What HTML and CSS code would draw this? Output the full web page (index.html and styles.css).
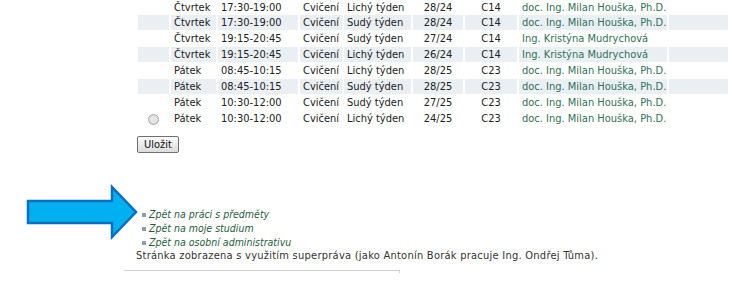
FILE: index.html
```html
<!DOCTYPE html>
<html lang="cs">
<head>
  <meta charset="UTF-8">
  <title>Rozvrh - cvičení</title>
  <link rel="stylesheet" href="styles.css">
</head>
<body>

<div class="page">

  <table class="schedule">
    <colgroup>
      <col class="c-radio">
      <col class="c-day">
      <col class="c-time">
      <col class="c-type">
      <col class="c-week">
      <col class="c-num">
      <col class="c-room">
      <col class="c-teacher">
      <col class="c-empty">
    </colgroup>
    <tr class="first">
      <td></td><td>Čtvrtek</td><td>17:30-19:00</td><td>Cvičení</td><td>Lichý týden</td><td class="center">28/24</td><td class="center">C14</td><td class="teacher">doc. Ing. Milan Houška, Ph.D.</td><td></td>
    </tr>
    <tr class="odd">
      <td></td><td>Čtvrtek</td><td>17:30-19:00</td><td>Cvičení</td><td>Sudý týden</td><td class="center">28/24</td><td class="center">C14</td><td class="teacher">doc. Ing. Milan Houška, Ph.D.</td><td></td>
    </tr>
    <tr>
      <td></td><td>Čtvrtek</td><td>19:15-20:45</td><td>Cvičení</td><td>Sudý týden</td><td class="center">27/24</td><td class="center">C14</td><td class="teacher">Ing. Kristýna Mudrychová</td><td></td>
    </tr>
    <tr class="odd">
      <td></td><td>Čtvrtek</td><td>19:15-20:45</td><td>Cvičení</td><td>Lichý týden</td><td class="center">26/24</td><td class="center">C14</td><td class="teacher">Ing. Kristýna Mudrychová</td><td></td>
    </tr>
    <tr>
      <td></td><td>Pátek</td><td>08:45-10:15</td><td>Cvičení</td><td>Lichý týden</td><td class="center">28/25</td><td class="center">C23</td><td class="teacher">doc. Ing. Milan Houška, Ph.D.</td><td></td>
    </tr>
    <tr class="odd">
      <td></td><td>Pátek</td><td>08:45-10:15</td><td>Cvičení</td><td>Sudý týden</td><td class="center">28/25</td><td class="center">C23</td><td class="teacher">doc. Ing. Milan Houška, Ph.D.</td><td></td>
    </tr>
    <tr>
      <td></td><td>Pátek</td><td>10:30-12:00</td><td>Cvičení</td><td>Sudý týden</td><td class="center">27/25</td><td class="center">C23</td><td class="teacher">doc. Ing. Milan Houška, Ph.D.</td><td></td>
    </tr>
    <tr>
      <td class="center"><span class="radio"></span></td><td>Pátek</td><td>10:30-12:00</td><td>Cvičení</td><td>Lichý týden</td><td class="center">24/25</td><td class="center">C23</td><td class="teacher">doc. Ing. Milan Houška, Ph.D.</td><td></td>
    </tr>
  </table>

  <button class="save">Uložit</button>

  <ul class="links">
    <li><a href="#">Zpět na práci s předměty</a></li>
    <li><a href="#">Zpět na moje studium</a></li>
    <li><a href="#">Zpět na osobní administrativu</a></li>
  </ul>

  <div class="footer">Stránka zobrazena s využitím superpráva (jako Antonín Borák pracuje Ing. Ondřej Tůma).</div>

  <div class="bottom-box"></div>

</div>

<svg class="arrow" width="116" height="56" viewBox="0 0 116 56">
  <polygon points="2,17 86,17 86,3 110,28 86,53 86,39 2,39" fill="#00b0f0" stroke="#0a6fc2" stroke-width="2.5" stroke-linejoin="miter"/>
</svg>

</body>
</html>
```

FILE: styles.css
```css
body {
  margin: 0;
  font-family: "DejaVu Sans", Verdana, sans-serif;
  font-stretch: condensed;
  font-size: 11px;
  color: #222;
  background: #fff;
  overflow: hidden;
}
.page {
  padding-left: 136px;
}
.schedule {
  table-layout: fixed;
  width: 594px;
  border-collapse: separate;
  border-spacing: 2px 1px;
  margin-top: -2px;
}
.schedule td {
  height: 15px;
  padding: 0 3px;
  line-height: 15px;
  white-space: nowrap;
  overflow: hidden;
}
/* top row is scrolled half out of view */
.schedule tr.first td {
  line-height: 9px;
  vertical-align: bottom;
  padding-bottom: 2px;
  height: 13px;
}
.schedule tr.odd td {
  background: #e9eff3;
}
.schedule .center {
  text-align: center;
}
.schedule .teacher {
  color: #2f7258;
}
.c-radio { width: 31px; }
.c-day { width: 45px; }
.c-time { width: 80px; }
.c-type { width: 42px; }
.c-week { width: 67px; }
.c-num { width: 50px; }
.c-room { width: 52px; }
.c-teacher { width: 148px; }
.c-empty { width: 59px; }
.radio {
  display: inline-block;
  width: 9px;
  height: 9px;
  margin-top: 3px;
  vertical-align: top;
  border: 1px solid #a8a8a8;
  border-radius: 50%;
  background: radial-gradient(circle, #e6e6e6 40%, #cfcfcf 100%);
}
.save {
  display: block;
  margin: 9px 0 0 1px;
  height: 17px;
  padding: 0 6px;
  font-family: "DejaVu Sans", Verdana, sans-serif;
  font-stretch: condensed;
  font-size: 11px;
  line-height: 13px;
  color: #111;
  background: linear-gradient(#fbfbfb, #dcdcdc);
  border: 1px solid #707070;
  border-radius: 2px;
}
.links {
  list-style: none;
  margin: 54px 0 0;
  padding: 0;
  line-height: 14px;
}
.links li {
  display: flex;
  align-items: center;
}
.links li::before {
  content: "";
  width: 4px;
  height: 4px;
  margin: 1px 3px 0 6px;
  background: #8c9ca8;
}
.links a {
  color: #1f5e3e;
  font-size: 10.5px;
  font-style: italic;
  text-decoration: none;
}
.footer {
  line-height: 14px;
  color: #333;
  letter-spacing: 0.25px;
}
.bottom-box {
  margin: 7px 0 0 -12px;
  width: 275px;
  height: 2px;
  border-top: 1px solid #cfcfcf;
  border-right: 1px solid #cfcfcf;
}
.arrow {
  position: absolute;
  left: 26px;
  top: 184px;
}
```
